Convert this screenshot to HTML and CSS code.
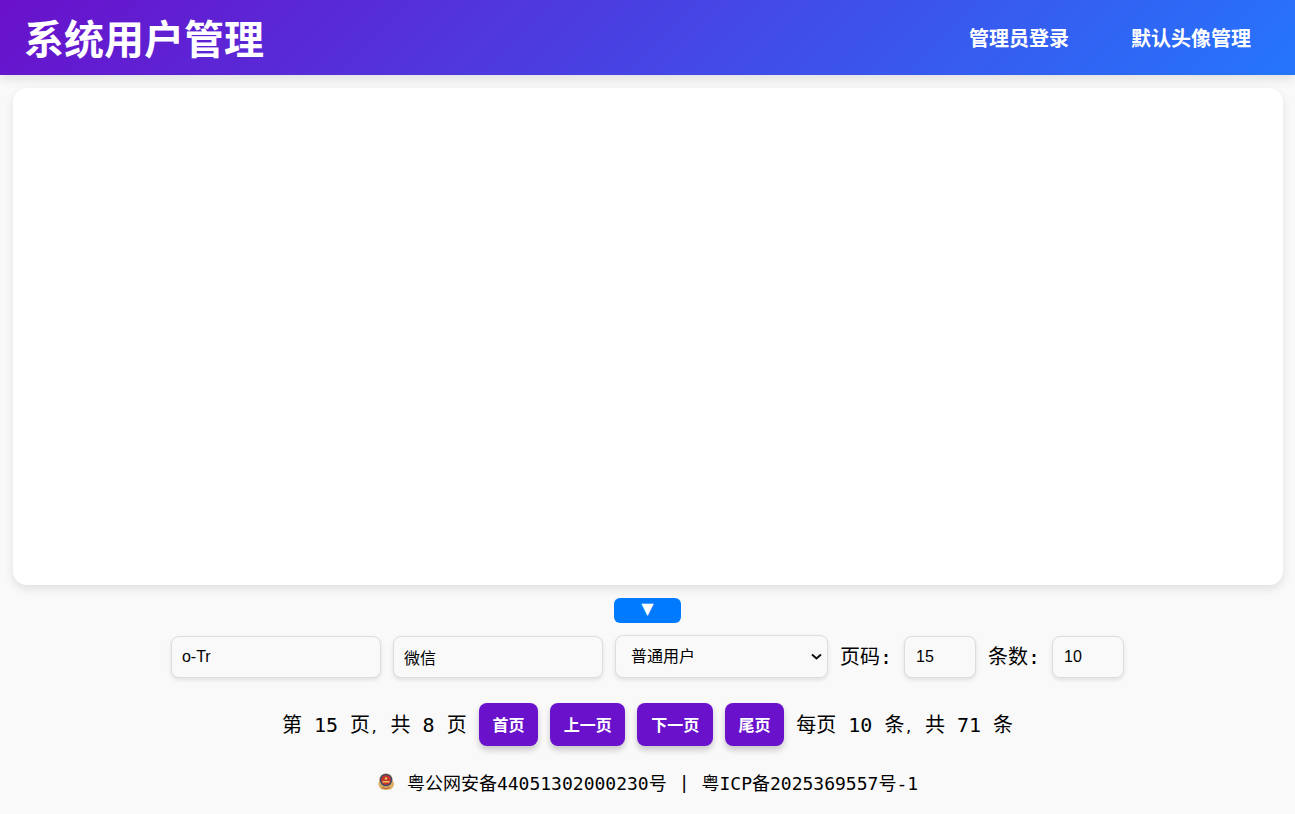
FILE: index.html
```html
<!DOCTYPE html>
<html lang="zh-CN">
<head>
  <meta charset="UTF-8">
  <title>系统用户管理</title>
  <link rel="stylesheet" href="styles.css">
</head>
<body>

<header class="topbar">
  <h1 class="title">系统用户管理</h1>
  <nav class="nav">
    <a class="nav-link" href="#">管理员登录</a>
    <a class="nav-link" href="#">默认头像管理</a>
  </nav>
</header>

<main class="content">
  <section class="table-card"></section>

  <button class="toggle" type="button">▼</button>

  <form class="filters">
    <input class="field field-wide" type="text" value="o-Tr">
    <input class="field field-wide" type="text" value="微信">
    <select class="field field-select">
      <option>普通用户</option>
    </select>
    <label class="filter-label">页码:</label>
    <input class="field field-num" type="text" value="15">
    <label class="filter-label">条数:</label>
    <input class="field field-num" type="text" value="10">
  </form>

  <div class="pager">
    <span class="pager-text">第 <b>15</b> 页<i class="comma">,</i> 共 <b>8</b> 页</span>
    <button class="page-btn" type="button">首页</button>
    <button class="page-btn" type="button">上一页</button>
    <button class="page-btn" type="button">下一页</button>
    <button class="page-btn" type="button">尾页</button>
    <span class="pager-text">每页 <b>10</b> 条<i class="comma">,</i> 共 <b>71</b> 条</span>
  </div>
</main>

<footer class="beian">
  <svg class="emblem" viewBox="0 0 18 18" width="18" height="18" aria-hidden="true">
    <path d="M9 .5c3.800 0 6.500 2.300 6.500 6 0 1.300.9 2.300 1.500 3.500.3 3-1.700 5.800-4.200 6.600-1.300.4-2.500.4-3.800.4s-2.500 0-3.800-.4C3.200 15.800 1.200 13 1.500 10c.6-1.200 1-2.200 1-3.500 0-3.700 2.700-6 6.500-6z" fill="#dcae62"/>
    <circle cx="9" cy="7" r="6.300" fill="#3f4d6e"/>
    <circle cx="9" cy="7" r="4.800" fill="#c9342a"/>
    <circle cx="9" cy="5.500" r="1.300" fill="#e9c15f"/>
    <rect x="5.500" y="8" width="7" height="1.500" fill="#e9c15f"/>
    <path d="M5 14.500q4 2 8 0" fill="none" stroke="#b5562e" stroke-width="1"/>
  </svg>
  <span class="beian-text">粤公网安备44051302000230号</span>
  <span class="beian-sep">|</span>
  <span class="beian-text">粤ICP备2025369557号-1</span>
</footer>

</body>
</html>
```

FILE: styles.css
```css
* {
  margin: 0;
  padding: 0;
  box-sizing: border-box;
}

body {
  background: #f9f9f9;
  color: #000;
  font-family: "Liberation Sans", "Noto Sans CJK SC", sans-serif;
  height: 814px;
  overflow: hidden;
}

.topbar {
  height: 75px;
  display: flex;
  align-items: center;
  justify-content: space-between;
  padding: 0 44px 0 24px;
  background: linear-gradient(135deg, #6a11cb, #2575fc);
  box-shadow: 0 4px 10px rgba(0, 0, 0, 0.1);
  color: #fff;
}

.title {
  font-size: 40px;
  line-height: 48px;
  font-weight: 700;
  padding-top: 4px;
}

.nav {
  display: flex;
  gap: 62px;
}

.nav-link {
  color: #fff;
  font-size: 20px;
  font-weight: 700;
  text-decoration: none;
}

.content {
  display: flex;
  flex-direction: column;
  align-items: center;
  padding-top: 13px;
}

.table-card {
  align-self: flex-start;
  width: 1270px;
  height: 497px;
  margin-left: 13px;
  background: #fff;
  border-radius: 14px;
  box-shadow: 0 4px 10px rgba(0, 0, 0, 0.1);
}

.toggle {
  width: 67px;
  height: 25px;
  margin-top: 13px;
  border: none;
  border-radius: 6px;
  background: #007bff;
  color: #fff;
  font-family: "DejaVu Sans", sans-serif;
  font-size: 16px;
  line-height: 20px;
  padding-bottom: 3px;
}

.filters {
  display: flex;
  align-items: center;
  gap: 12px;
  margin-top: 12px;
  height: 43px;
}

.field {
  height: 42px;
  padding: 0 10px;
  border: 1px solid #ddd;
  border-radius: 8px;
  background: #f9f9f9;
  box-shadow: 0 2px 4px rgba(0, 0, 0, 0.1);
  font-family: "Liberation Sans", "Noto Sans CJK SC", sans-serif;
  font-size: 16px;
  color: #000;
  align-self: flex-end;
}

.field-wide {
  width: 210px;
}

.field-select {
  width: 213px;
  height: 43px;
  padding-left: 15px;
  appearance: none;
  background-image: url("data:image/svg+xml,%3Csvg xmlns='http://www.w3.org/2000/svg' width='11' height='7' viewBox='0 0 11 7'%3E%3Cpath d='M1 1.500l4.500 4 4.500-4' fill='none' stroke='%23111' stroke-width='2'/%3E%3C/svg%3E");
  background-repeat: no-repeat;
  background-position: right 5px center;
}

.field-num {
  width: 72px;
  padding-left: 11px;
}

.filter-label,
.pager-text {
  font-family: "DejaVu Sans Mono", "Noto Sans CJK SC", monospace;
  font-size: 20px;
}

.filter-label {
  white-space: nowrap;
  margin-bottom: 2px;
}

.pager {
  display: flex;
  align-items: center;
  justify-content: center;
  gap: 12px;
  margin-top: 25px;
  height: 43px;
}

.pager-text {
  white-space: pre;
  margin-bottom: 3px;
}

.pager-text b {
  font-weight: 400;
}

.comma {
  font-style: normal;
  font-size: 14px;
}

.page-btn {
  height: 43px;
  padding: 0 13.7px 2px;
  border: none;
  border-radius: 8px;
  background: #6a11cb;
  color: #fff;
  font-family: "Liberation Sans", "Noto Sans CJK SC", sans-serif;
  font-size: 16px;
  font-weight: 700;
  box-shadow: 0 4px 6px rgba(0, 0, 0, 0.2);
}

.beian {
  display: flex;
  align-items: center;
  justify-content: center;
  gap: 12px;
  margin-top: 24px;
  height: 24px;
  font-family: "DejaVu Sans Mono", "Noto Sans CJK SC", monospace;
  font-size: 18px;
}
```
